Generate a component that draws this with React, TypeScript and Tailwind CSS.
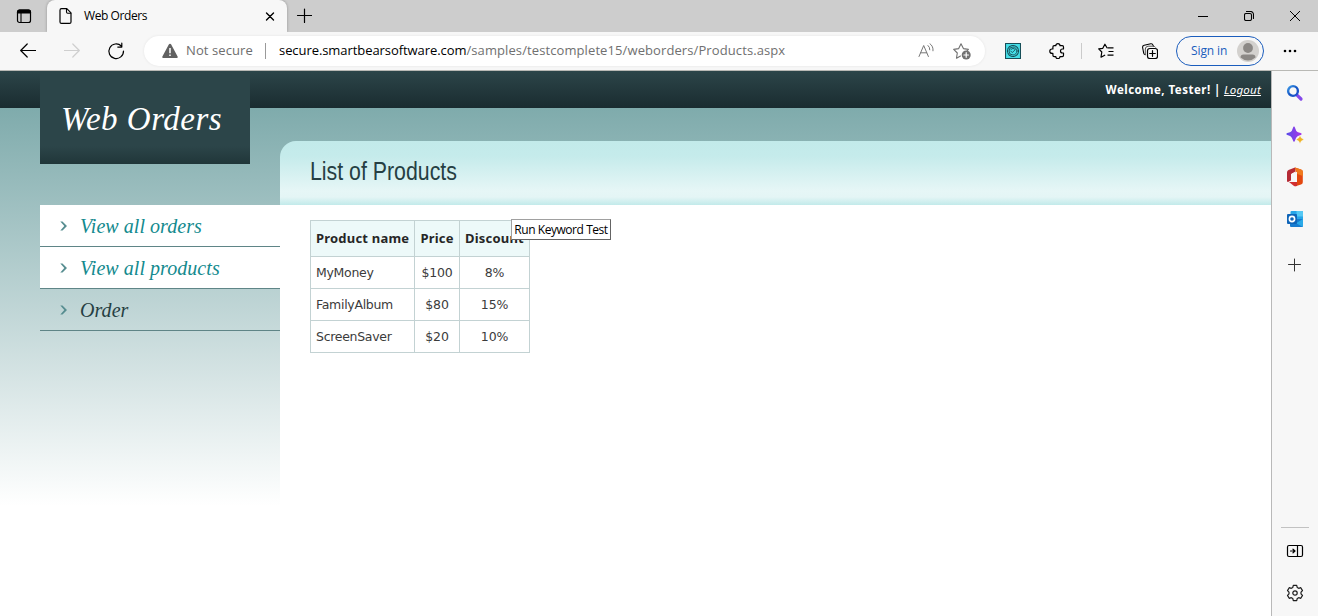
import React from "react";

const stroke = {
  fill: "none",
  stroke: "currentColor",
  strokeWidth: 1.1,
  strokeLinecap: "round" as const,
  strokeLinejoin: "round" as const,
};

function Icon({ size = 16, className = "", children }: { size?: number; className?: string; children: React.ReactNode }) {
  return (
    <svg width={size} height={size} viewBox={`0 0 ${size} ${size}`} className={`block shrink-0 ${className}`} {...stroke}>
      {children}
    </svg>
  );
}

function TabStrip() {
  return (
    <div className="flex h-8 items-center bg-[#cdcdcd] text-black">
      <div className="flex w-[47px] justify-center">
        <Icon size={16}>
          <rect x="1.5" y="2" width="13" height="12.5" rx="2" strokeWidth="1.2" />
          <path d="M1.5 5V4a2 2 0 0 1 2-2h9a2 2 0 0 1 2 2v1z" fill="currentColor" />
          <path d="M5 5v9" />
        </Icon>
      </div>
      <div className="flex h-8 w-60 items-center rounded-t-lg bg-[#f7f7f7] pl-[11px] shadow-[0_0_3px_rgba(0,0,0,0.3)]">
        <Icon size={16}>
          <path d="M3.5.7h5.3l4.2 4.2v9a1.5 1.5 0 0 1-1.5 1.5h-8A1.5 1.5 0 0 1 2 13.9V2.2A1.5 1.5 0 0 1 3.5.7z" strokeWidth="1.2" />
          <path d="M8.5 1v3a1.2 1.2 0 0 0 1.2 1.2h3" />
        </Icon>
        <span className="ml-[10px] text-[12px] tracking-[-0.42px]">Web Orders</span>
        <Icon size={10} className="ml-auto mr-[12px]">
          <path d="M1.5 2l7 7M8.5 2l-7 7" strokeWidth="1.4" />
        </Icon>
      </div>
      <Icon size={16} className="ml-[9px]">
        <path d="M8.5 1v13.500M1.500 7.500h14" strokeWidth="1.2" />
      </Icon>
      <div className="ml-auto flex items-center gap-[36px] pr-[18px]">
        <Icon size={10}>
          <path d="M0 5.5h10" strokeWidth="1" strokeLinecap="butt" />
        </Icon>
        <Icon size={10}>
          <rect x=".5" y="2.5" width="7" height="7" rx="1.5" />
          <path d="M2.5.5h4a3 3 0 0 1 3 3v4" />
        </Icon>
        <Icon size={10}>
          <path d="M.2.2l9.6 9.6M9.8.2L.2 9.8" strokeWidth="1" />
        </Icon>
      </div>
    </div>
  );
}

function Toolbar() {
  return (
    <div className="flex h-[39px] items-center border-b border-[#b9b9b5] bg-[#f7f7f7] text-black">
      <Icon className="ml-5">
        <path d="M15.5 7.5H.8M7.2 1L.7 7.5l6.500 6.500" strokeWidth="1.2" />
      </Icon>
      <Icon className="ml-[28px] text-[#cfcfcf]">
        <path d="M.5 7.500h14.700M8.800 1L15.300 7.500l-6.500 6.500" strokeWidth="1.2" />
      </Icon>
      <Icon size={18} className="ml-[27px]">
        <path d="M14.300 4A7.300 7.300 0 1 0 16.500 9M14.800 1.200v3.900h-4" strokeWidth="1.2" />
      </Icon>
      <div className="ml-[19px] flex h-[30px] w-[841px] items-center rounded-full bg-white pl-[18px] pr-[14px] shadow-[0_0_3px_rgba(0,0,0,0.08)]">
        <svg width="16" height="16" viewBox="0 0 16 16" className="shrink-0">
          <path d="M8 .8q.8 0 1.200.8l6.400 11.800q.7 1.600-1 1.600H1.400q-1.700 0-1-1.600L6.800 1.600Q7.200.8 8 .8z" fill="#616161" />
          <path d="M8 5v5.200M8 11.500v1.500" stroke="#fff" strokeWidth="1.5" />
        </svg>
        <span className="ml-2 w-[79px] shrink-0 whitespace-nowrap text-[13px] tracking-[0.1px] text-[#6e6e6e]">Not secure</span>
        <span className="h-4 w-px shrink-0 bg-[#9a9a9a]" />
        <span className="ml-[13px] shrink-0 whitespace-nowrap text-[13px] tracking-[0.1px] text-[#707070]">
          <span className="tracking-[-0.07px] text-black">secure.smartbearsoftware.com</span>
          /samples/testcomplete15/weborders/Products.aspx
        </span>
        <Icon className="ml-auto text-[#777]">
          <path d="M1 13.500L5.700 2.500l4.700 11M2.700 9.800h6M10 2.500q2 1.600 1.800 4.300M12 .8q3.500 2.400 3 7" strokeWidth="1" />
        </Icon>
        <Icon size={18} className="ml-[19px] text-[#707070]">
          <path d="M7.500 14l-4 2.200.8-5.200L.7 7.400l5-.8L8 1.800l2.400 4.800 5 .8-1.200 1.200" />
          <circle cx="13.200" cy="13" r="4.500" fill="currentColor" stroke="none" />
          <path d="M13.200 10.700v4.600M10.900 13h4.600" stroke="#fff" strokeWidth="1.2" />
        </Icon>
      </div>
      <Icon className="ml-5 text-[#174e58]">
        <rect x=".5" y=".5" width="15" height="15" fill="#45dfe8" />
        <circle cx="8" cy="8" r="5.500" strokeDasharray="1.500 .8" />
        <circle cx="8" cy="8" r="4" strokeWidth=".9" />
        <path d="M5.700 8l1.600 1.600 3-3M6 6.300q2-2 3.800-.3" strokeWidth=".9" />
      </Icon>
      <Icon className="ml-[28px]">
        <path
          d="M5.200 2.700h1.600a2.100 2.100 0 0 1 4.200 0h2.300q1.200 0 1.200 1.200V6h-1a2 2 0 0 0 0 4h1v2.300q0 1.300-1.200 1.300H11a2.100 2.100 0 0 1-4.200 0H5.200q-1.300 0-1.300-1.300V10.400H3a2.200 2.200 0 0 1 0-4.400h.9V4q0-1.300 1.300-1.300z"
          strokeWidth="1.2"
        />
      </Icon>
      <span className="ml-4 h-4 w-px bg-[#cbcbcb]" />
      <Icon className="ml-4">
        <path d="M9.500 4.800h6M10.500 8.500h5M9.500 12.200h6" strokeWidth="1.2" strokeLinecap="butt" />
        <path d="M9 4.800L6.900 1.200 4.800 5.300.7 5.900l3.100 3.100-.8 5.200 3.700-2" strokeWidth="1.2" />
      </Icon>
      <Icon className="ml-7">
        <rect x="5.500" y="5.500" width="10" height="10" rx="2.300" strokeWidth="1.2" />
        <path d="M10.500 7.700v5.600M7.700 10.500h5.600" strokeWidth="1.2" />
        <path d="M3.300 11.700q-1.300-.2-1.600-1.500L.6 4.500q-.2-1.900 1.600-2.300L8.800.8q1.700-.3 2.300 1.500l.3.900" strokeWidth="1.100" />
        <path d="M3.300 11.700V6q.2-2.600 2.700-2.800h5.400q1.400 0 2 1" strokeWidth="1" stroke="#555" />
      </Icon>
      <div className="ml-[18px] flex h-[30px] w-[88px] items-center justify-between rounded-full border border-[#1b5dbd] pl-[14px] pr-1 text-[#1b5dbd]">
        <span className="whitespace-nowrap text-[12px] tracking-[-0.1px]">Sign in</span>
        <svg width="22" height="22" viewBox="0 0 22 22" className="shrink-0">
          <circle cx="11" cy="11" r="11" fill="#d3d1ce" />
          <circle cx="11" cy="8" r="4.900" fill="#8b8885" />
          <path d="M3.500 17.500q0-3 3-3h9q3 0 3 3a11 11 0 0 1-15 0z" fill="#8b8885" />
        </svg>
      </div>
      <svg width="14" height="4" viewBox="0 0 14 4" className="ml-[19px]">
        <circle cx="2" cy="2" r="1.300" />
        <circle cx="7" cy="2" r="1.300" />
        <circle cx="12" cy="2" r="1.300" />
      </svg>
    </div>
  );
}

const menu = [
  { label: "View all orders", active: true },
  { label: "View all products", active: true },
  { label: "Order", active: false },
];

function LeftColumn() {
  return (
    <div className="w-[280px] shrink-0 pl-10">
      <div className="h-[93px] w-[210px] bg-[linear-gradient(#2c4549_0,#2c4549_75px,#203639_93px)] pl-[21px] pt-[26px] font-['Liberation_Serif',serif] text-[33px] italic leading-[44px] tracking-[0.5px] text-white">
        <span className="whitespace-nowrap">Web Orders</span>
      </div>
      <nav className="mt-[41px] font-['Liberation_Serif',serif] text-[20px] italic">
        {menu.map((item) => (
          <a
            key={item.label}
            className={`flex h-[42px] items-center border-b border-[#5f8587] pl-[20px] ${
              item.active ? "bg-white text-[#138a8e]" : "text-[#263f43]"
            }`}
          >
            <svg width="7" height="10" viewBox="0 0 7 10" className="mr-[13px]">
              <path d="M.3.500h2.200L7 5 2.500 9.500H.300L4.300 5z" fill="#568d90" />
            </svg>
            <span className="pt-px tracking-[0.05px]">{item.label}</span>
          </a>
        ))}
      </nav>
    </div>
  );
}

const rows = [
  ["MyMoney", "$100", "8%"],
  ["FamilyAlbum", "$80", "15%"],
  ["ScreenSaver", "$20", "10%"],
];

function ProductTable() {
  return (
    <div className="grid w-[220px] grid-cols-[104px_45px_70px] grid-rows-[36px_32px_32px_32px] border-l border-t border-[#c3d2d3] text-[12.5px] text-[#3b3b3b]">
      {["Product name", "Price", "Discount"].map((h, i) => (
        <div
          key={h}
          className={`flex items-center whitespace-nowrap border-b border-r border-[#c3d2d3] bg-[#edf9f9] font-['Noto_Sans',sans-serif] text-[13px] font-bold tracking-[0.2px] text-[#262626] ${
            i === 0 ? "pl-[5px]" : "justify-center"
          }`}
        >
          {h}
        </div>
      ))}
      {rows.flatMap((row) =>
        row.map((cell, i) => (
          <div
            key={row[0] + i}
            className={`flex items-center border-b border-r border-[#c3d2d3] pt-[2px] font-['DejaVu_Sans',sans-serif] ${
              i === 0 ? "pl-[5px] tracking-[-0.3px]" : "justify-center tracking-[-0.15px]"
            }`}
          >
            {cell}
          </div>
        ))
      )}
    </div>
  );
}

function Content() {
  return (
    <div className="flex min-w-0 grow flex-col">
      <div className="flex h-[70px] shrink-0 items-start justify-end gap-[3px] pr-[10px] pt-[11px] font-['Noto_Sans',sans-serif] text-[11.5px] leading-4 text-white">
        <b className="whitespace-nowrap tracking-[0.48px]">Welcome, Tester! |</b>
        <a className="tracking-[0.25px] italic underline">Logout</a>
      </div>
      <div className="h-16 shrink-0 rounded-tl-2xl bg-[linear-gradient(#c2eaea_0,#c5ebeb_15px,#e6f6f6_50px,#e4f5f5_56px,#c2eaea_64px)] pl-[29.5px] pt-[14px]">
        <h1 className="origin-left scale-x-[0.82] whitespace-nowrap font-['Liberation_Sans',sans-serif] text-[26px] leading-8 text-[#263f43]">
          List of Products
        </h1>
      </div>
      <div className="relative grow bg-white pl-[30px] pt-[15px]">
        <ProductTable />
        <div className="absolute left-[231px] top-[14px] flex h-[21px] w-[100px] items-center justify-center whitespace-nowrap border border-[#646464] border-l-[#a0a0a0] border-t-[#a0a0a0] bg-white text-[12px] tracking-[-0.45px] text-black">
          Run Keyword Test
        </div>
      </div>
    </div>
  );
}

function EdgeSidebar() {
  return (
    <aside className="flex w-[47px] shrink-0 flex-col items-center border-l border-[#b9b9b9] bg-[#f7f7f7] pb-[14px] pt-[13px]">
      <svg width="18" height="18" viewBox="0 0 18 18">
        <defs>
          <linearGradient id="lens" x1="0" y1="0" x2="1" y2="1">
            <stop offset="0" stopColor="#3f9be8" />
            <stop offset=".5" stopColor="#1456c4" />
            <stop offset="1" stopColor="#1f50cf" />
          </linearGradient>
        </defs>
        <path d="M11.300 11.300l3.700 3.700" stroke="#8448ea" strokeWidth="3.200" strokeLinecap="round" />
        <circle cx="7" cy="7" r="4.900" fill="#f7f7f7" stroke="url(#lens)" strokeWidth="2.400" />
      </svg>
      <svg width="18" height="18" viewBox="0 0 18 18" className="mt-6">
        <defs>
          <linearGradient id="spark" x1="0" y1="0" x2="1" y2="0">
            <stop offset="0" stopColor="#584ce8" />
            <stop offset="1" stopColor="#a936e8" />
          </linearGradient>
        </defs>
        <path
          d="M8 .5q.7 0 1 1.200 1 3.500 2.500 4.300 1 .6 3.200 1.100 1 .4 1 1t-1 1q-2.400.6-3.500 1.300-1.200 1-2.200 4.200-.3 1.200-1 1.200t-1-1.200Q6 11.400 4.800 10.400q-1-.7-3.500-1.300-1-.4-1-1t1-1q2.200-.5 3.200-1.100Q6 5.200 7 1.700 7.300.5 8 .5z"
          fill="url(#spark)"
        />
        <path
          d="M14 9.800q.5 0 .7 1 .4 1.400 2 1.900.9.200.9.800t-.9.800q-1.600.5-2 1.900-.2 1-.7 1t-.7-1q-.4-1.400-2-1.900-.9-.2-.9-.8t.9-.8q1.600-.5 2-1.900.2-1 .7-1z"
          fill="#f0b323"
          stroke="#f7f7f7"
          strokeWidth=".5"
        />
      </svg>
      <svg width="18" height="20" viewBox="0 0 18 20" className="mt-[23px]">
        <path d="M9 .5L2.500 3Q1 3.700 1 5.500v8.400q0 1 1 1.200l3-1.600V7l4-2.200z" fill="#b52a35" />
        <path d="M9 .5l6 2q1.800.6 1.800 2.300v10.500q0 1.700-1.800 2.300l-5.500 1.700V4.800L9 .5z" fill="#e3470f" />
        <path d="M9 .5l6 2q1.800.6 1.800 2.300V9l-5.500-2z" fill="#f07a1c" />
        <path d="M3 15h8v4l-1.500.3q-1 0-1.800-.5z" fill="#d12f30" />
        <path d="M6 6.500l5-1.700V15H3l3-2z" fill="#f7f7f7" />
      </svg>
      <svg width="18" height="18" viewBox="0 0 18 18" className="mt-[23px]">
        <rect x="4.500" y="1" width="12.500" height="13" rx="1" fill="#27a5e8" />
        <path d="M10.500 1H16q1 0 1 1v4.500h-6.500z" fill="#55c8f4" />
        <path d="M4 9h13v7q0 1-1 1H5q-1 0-1-1z" fill="#167bd0" />
        <path d="M17 9l-7 4.200 6.500 3.600q.5-.3.5-.8z" fill="#2baae8" />
        <rect x="1" y="4" width="10" height="10" rx="1" fill="#0f65b8" />
        <circle cx="6" cy="9" r="2.600" fill="none" stroke="#fff" strokeWidth="1.600" />
      </svg>
      <Icon size={14} className="mt-[30px] text-[#333]">
        <path d="M6.500 1v12M.5 6.500h12" strokeWidth="1" />
      </Icon>
      <span className="mt-auto h-px w-7 bg-[#c2c2c2]" />
      <Icon size={18} className="mt-[14px] text-black">
        <rect x="1.500" y="3.500" width="15" height="11" rx="1.500" strokeWidth="1.200" />
        <path d="M11.500 3.500v11M4.500 9H8.500M7 7.200L9 9l-2 1.800" strokeWidth="1.200" />
      </Icon>
      <Icon size={18} className="mt-6 text-[#1d1d1d]">
        <path
          d="M7.300 1.300h3.400l.5 2.100 1.500.9 2.100-.6 1.700 2.900-1.500 1.500v1.800l1.500 1.500-1.700 2.900-2.100-.6-1.500.9-.5 2.100H7.300l-.5-2.100-1.500-.9-2.100.6-1.700-2.900L3 9.900V8.100L1.500 6.600l1.700-2.900 2.100.6 1.500-.9z"
          strokeWidth="1.200"
        />
        <circle cx="9" cy="9" r="2.200" strokeWidth="1.200" />
      </Icon>
    </aside>
  );
}

export default function App() {
  return (
    <div className="flex h-[616px] w-[1318px] flex-col overflow-hidden bg-white font-['Open_Sans',sans-serif]">
      <TabStrip />
      <Toolbar />
      <div className="flex min-h-0 grow">
        <main className="flex min-w-0 grow bg-[linear-gradient(#2c4549,#1a2c30),linear-gradient(#7fabac_37px,#ffffff_435px)] bg-[length:100%_37px,100%_100%] bg-no-repeat">
          <LeftColumn />
          <Content />
        </main>
        <EdgeSidebar />
      </div>
    </div>
  );
}
